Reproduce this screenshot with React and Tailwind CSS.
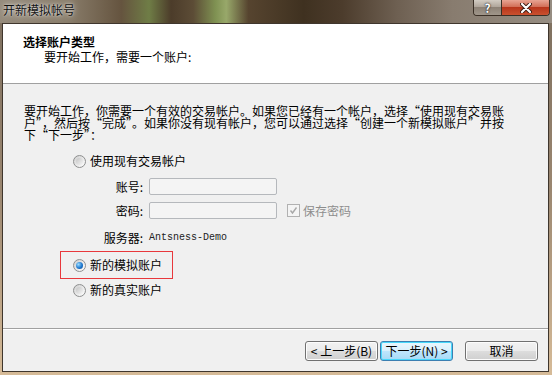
import React from "react";

const FONT = { fontFamily: '"Noto Sans CJK SC", "Noto Sans", sans-serif' };

function Radio({ checked }) {
  return (
    <span className="flex h-[13px] w-[13px] shrink-0 items-center justify-center rounded-full border border-[#8e8f8f] bg-[linear-gradient(135deg,#cfcfcf,#ffffff)]">
      {checked ? (
        <span className="h-[7px] w-[7px] rounded-full bg-[radial-gradient(circle_at_35%_35%,#9adcff,#1f78cf_55%,#0b4b8f)]" />
      ) : (
        <span className="h-[7px] w-[7px] rounded-full bg-[linear-gradient(135deg,#c4c4c4,#f6f6f6)]" />
      )}
    </span>
  );
}

function Button({ children, primary }) {
  return (
    <div
      className={
        "flex h-[20px] w-[73px] items-center justify-center rounded-[3px] border text-[12px] leading-[12px] text-black " +
        (primary
          ? "border-[#3c7fb1] bg-[linear-gradient(to_bottom,#eaf6fd_0%,#d9f0fc_50%,#bee6fd_51%,#a7d9f5_100%)] shadow-[inset_0_0_0_1px_#48d8fb]"
          : "border-[#707070] bg-[linear-gradient(to_bottom,#f2f2f2_0%,#ebebeb_50%,#dddddd_51%,#cfcfcf_100%)] shadow-[inset_0_0_0_1px_#fcfcfc]")
      }
    >
      {children}
    </div>
  );
}

export default function App() {
  return (
    <div
      className="flex h-[375px] w-[552px] flex-col overflow-hidden bg-[linear-gradient(to_bottom,#7c6e5e_0%,#9a8670_50%,#d6bb98_100%)]"
      style={FONT}
    >
      {/* Title bar */}
      <div className="flex h-[23px] shrink-0 items-start justify-between bg-[linear-gradient(to_right,#958b7c_0%,#8a7e6c_12%,#65543f_22%,#6f7d46_27%,#4c3c2a_31%,#5c4c36_35%,#7f9152_39%,#98a86a_41%,#56442f_45%,#3f3120_55%,#4c3c2c_62%,#6e6052_72%,#887c6f_82%,#968d82_100%)]">
        <div className="pl-[3px] pt-[4px] text-[12px] leading-[12px] text-[#111] [text-shadow:0_0_6px_rgba(255,255,255,0.85),0_0_2px_rgba(255,255,255,0.7)]">
          开新模拟帐号
        </div>
        <div className="mr-[2px] flex h-[16px] overflow-hidden rounded-b-[4px] border border-t-0 border-[#3a2f25]">
          <div className="flex w-[28px] items-center justify-center border-r border-[#3a2f25] bg-[linear-gradient(to_bottom,#d2cbc2_0%,#b0a69b_45%,#8d8276_50%,#a0968a_100%)] text-[12px] font-bold leading-[12px] text-white [text-shadow:0_0_1px_#222,0_0_2px_#222]">
            ?
          </div>
          <div className="flex w-[47px] items-center justify-center bg-[linear-gradient(to_bottom,#e8a493_0%,#d26f58_45%,#b8361c_50%,#c9502f_100%)]">
            <svg width="12" height="10" viewBox="0 0 12 10">
              <path d="M2 1 L10 9 M10 1 L2 9" stroke="#3a1a12" strokeWidth="4" strokeLinecap="round" />
              <path d="M2 1 L10 9 M10 1 L2 9" stroke="#ffffff" strokeWidth="2.2" strokeLinecap="round" />
            </svg>
          </div>
        </div>
      </div>

      {/* Client area */}
      <div className="mb-[3px] ml-[2px] mr-[3px] flex flex-1 flex-col border border-[#3f362d] bg-[#f0f0f0]">
        {/* Header */}
        <div className="h-[59px] shrink-0 bg-white pl-[20px] pt-[11px]">
          <div className="text-[12px] font-bold leading-[14px] text-black">选择账户类型</div>
          <div className="mt-[1px] pl-[21px] text-[12px] leading-[13px] text-black">要开始工作，需要一个账户:</div>
        </div>

        {/* Body */}
        <div className="flex flex-1 flex-col border-t border-[#a0a0a0] pl-[21px] pt-[21px] text-[12px] text-black">
          <p className="whitespace-nowrap text-[12px] leading-[12px] [font-feature-settings:'fwid']">
            要开始工作，你需要一个有效的交易帐户。如果您已经有一个帐户，选择“使用现有交易账
            <br />
            户”，然后按“完成”。如果你没有现有帐户，您可以通过选择“创建一个新模拟账户”并按
            <br />
            下“下一步”：
          </p>

          <div className="ml-[49px] mt-[12px] flex h-[16px] items-center gap-[4px] leading-[12px]">
            <Radio />
            <span>使用现有交易帐户</span>
          </div>

          <div className="mt-[9px] flex h-[17px] items-center leading-[12px]">
            <span className="w-[119px] text-right">账号:</span>
            <div className="ml-[6px] h-[17px] w-[128px] rounded-[2px] border border-[#b5b8bc] bg-[#f4f4f4]" />
          </div>

          <div className="mt-[7px] flex h-[17px] items-center leading-[12px]">
            <span className="w-[119px] text-right">密码:</span>
            <div className="ml-[6px] h-[17px] w-[128px] rounded-[2px] border border-[#b5b8bc] bg-[#f4f4f4]" />
            <div className="ml-[10px] flex h-[13px] w-[13px] items-center justify-center border border-[#b1b1b1] bg-[#f4f4f4]">
              <svg width="9" height="9" viewBox="0 0 9 9">
                <path d="M1.5 4.5 L3.5 7 L7.5 1.5" fill="none" stroke="#a8a8a8" strokeWidth="1.4" />
              </svg>
            </div>
            <span className="ml-[3px] text-[#8d8d8d]">保存密码</span>
          </div>

          <div className="mt-[12px] flex h-[14px] items-center leading-[12px]">
            <span className="w-[119px] text-right">服务器:</span>
            <span
              className="ml-[6px] text-[10px] leading-[12px] text-[#222]"
              style={{ fontFamily: '"Liberation Mono", "DejaVu Sans Mono", monospace' }}
            >
              Antsness-Demo
            </span>
          </div>

          <div className="ml-[36px] mt-[6px] flex h-[28px] w-[113px] items-center gap-[4px] border border-[#e8383c] pl-[12px] leading-[12px]">
            <Radio checked />
            <span>新的模拟账户</span>
          </div>

          <div className="ml-[49px] mt-[3px] flex h-[16px] items-center gap-[4px] leading-[12px]">
            <Radio />
            <span>新的真实账户</span>
          </div>
        </div>

        {/* Footer */}
        <div className="flex h-[43px] shrink-0 items-start justify-end border-t border-[#a0a0a0] pr-[10px] pt-[12px] shadow-[inset_0_1px_0_#ffffff]">
          <Button>&lt; 上一步(B)</Button>
          <div className="ml-[2px]">
            <Button primary>下一步(N) &gt;</Button>
          </div>
          <div className="ml-[12px]">
            <Button>取消</Button>
          </div>
        </div>
      </div>
    </div>
  );
}
